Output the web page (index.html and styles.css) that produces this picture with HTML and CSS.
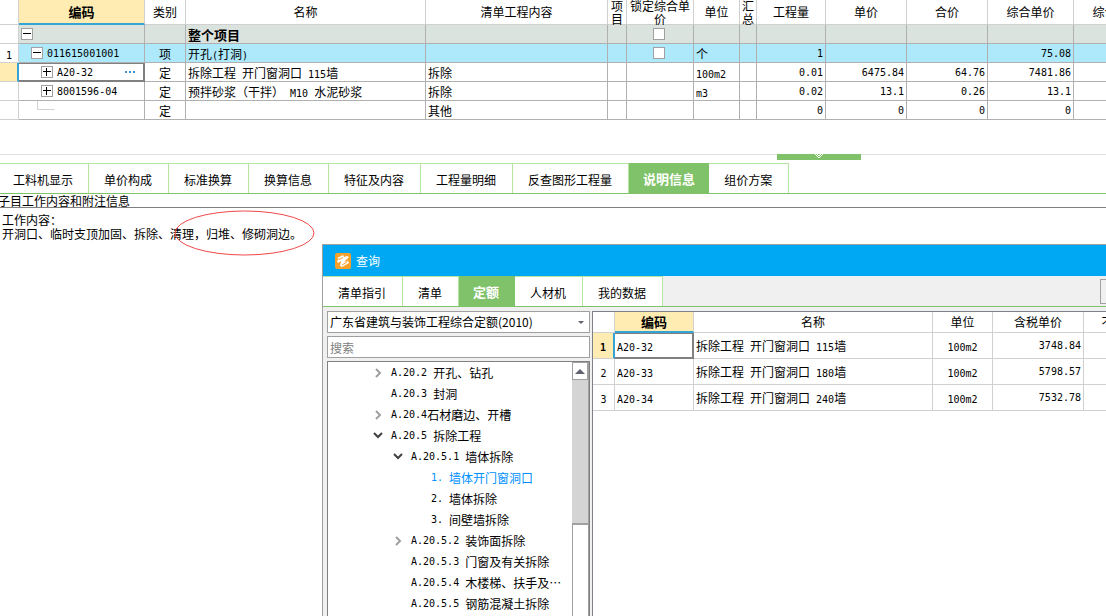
FILE: index.html
```html
<!DOCTYPE html>
<html lang="zh-CN">
<head>
<meta charset="utf-8">
<title>查询</title>
<link rel="stylesheet" href="styles.css">
</head>
<body>
<div class="app">
<section class="bill">
<table class="bill-table">
<colgroup><col class="w19"><col class="w126"><col class="w41"><col class="w240"><col class="w182"><col class="w19"><col class="w67"><col class="w46"><col class="w17"><col class="w69"><col class="w81"><col class="w81"><col class="w86"><col class="w86"></colgroup>
<thead><tr>
<th></th><th class="picked">编码</th><th>类别</th><th>名称</th><th>清单工程内容</th><th><div class="wrap">项目</div></th><th><div class="wrap">锁定综合单价</div></th><th>单位</th><th><div class="wrap">汇总</div></th><th>工程量</th><th>单价</th><th>合价</th><th>综合单价</th><th>综合合价</th>
</tr></thead>
<tbody>
<tr class="total"><td class="rowno"></td><td class="code"><div class="node lv0"><button class="fold" aria-label="折叠"><svg viewBox="0 0 12 12"><path d="M2 5.5h8"/></svg></button></div></td><td></td><td class="strong">整个项目</td><td></td><td></td><td class="mid check"><input type="checkbox" aria-label="锁定综合单价"></td><td></td><td></td><td></td><td></td><td></td><td></td><td></td></tr>
<tr class="item"><td class="rowno"><span class="n">1</span></td><td class="code"><div class="node lv1"><button class="fold" aria-label="折叠"><svg viewBox="0 0 12 12"><path d="M2 5.5h8"/></svg></button><span class="n">011615001001</span></div></td><td class="mid">项</td><td>开孔<span class="n">(</span>打洞<span class="n">)</span></td><td></td><td></td><td class="mid check"><input type="checkbox" aria-label="锁定综合单价"></td><td>个</td><td></td><td class="num">1</td><td class="num"></td><td class="num"></td><td class="num">75.08</td><td></td></tr>
<tr><td class="rowno current"></td><td class="code editing"><div class="node lv2"><button class="fold" aria-label="展开"><svg viewBox="0 0 12 12"><path d="M2 5.5h8M5.5 2v8"/></svg></button><span class="n">A20-32</span><button class="more" aria-label="更多"><svg viewBox="0 0 12 4"><path d="M1 1h2v2H1zM5 1h2v2H5zM9 1h2v2H9z"/></svg></button></div></td><td class="mid">定</td><td>拆除工程<span class="n"> </span>开门窗洞口<span class="n"> 115</span>墙</td><td>拆除</td><td></td><td></td><td><span class="n">100m2</span></td><td></td><td class="num">0.01</td><td class="num">6475.84</td><td class="num">64.76</td><td class="num">7481.86</td><td></td></tr>
<tr><td class="rowno"></td><td class="code"><div class="node lv2"><button class="fold" aria-label="展开"><svg viewBox="0 0 12 12"><path d="M2 5.5h8M5.5 2v8"/></svg></button><span class="n">8001596-04</span></div></td><td class="mid">定</td><td>预拌砂浆（干拌）<span class="n"> M10 </span>水泥砂浆</td><td>拆除</td><td></td><td></td><td><span class="n">m3</span></td><td></td><td class="num">0.02</td><td class="num">13.1</td><td class="num">0.26</td><td class="num">13.1</td><td></td></tr>
<tr><td class="rowno"></td><td class="code"><div class="node leaf"><svg class="branch" viewBox="0 0 18 18"><path d="M.5 0v8.500h17"/></svg></div></td><td class="mid">定</td><td></td><td>其他</td><td></td><td></td><td></td><td></td><td class="num">0</td><td class="num">0</td><td class="num">0</td><td class="num">0</td><td></td></tr>
</tbody>
</table>
</section>
<div class="splitter"><button class="handle" aria-label="收起"><svg viewBox="0 0 10 6"><path d="M1 0l4 4 4-4M3 0l2 2 2-2"/></svg></button></div>
<nav class="tabs">
<button>工料机显示</button><button>单价构成</button><button>标准换算</button><button>换算信息</button><button>特征及内容</button><button>工程量明细</button><button>反查图形工程量</button><button class="on">说明信息</button><button>组价方案</button>
</nav>
<h2 class="caption">子目工作内容和附注信息</h2>
<div class="notes">
<p>工作内容：</p>
<p>开洞口、临时支顶加固、拆除、清理，归堆、修砌洞边。</p>
<svg class="mark" viewBox="0 0 141 46"><ellipse cx="70.500" cy="23" rx="69.500" ry="22"/></svg>
</div>
</div>

<section class="dialog">
<header class="title"><svg class="logo" viewBox="0 0 16 16"><rect width="16" height="16" rx="2" fill="#f7a128"/><path d="M2 5l6-3 1 2 3-1 2 1-5 5 4-1 1 2-7 4-2-1 1-5-3 2-1-2 2-2z" fill="#fff"/><path d="M4 6.500l4-2M7 12l5-3" stroke="#f7a128" fill="none"/></svg>查询</header>
<div class="dialog-bar">
<nav class="tabs"><button>清单指引</button><button>清单</button><button class="on">定额</button><button>人材机</button><button>我的数据</button></nav>
<button class="edge" aria-label="选项"></button>
</div>
<div class="dialog-body">
<aside class="side">
<div class="picker"><select aria-label="定额库"><option>广东省建筑与装饰工程综合定额(2010)</option></select></div>
<input class="search" type="text" placeholder="搜索" aria-label="搜索">
<div class="tree">
<ul>
<li class="d1"><svg class="arrow" viewBox="0 0 10 10"><path d="M3 1l4 4-4 4"/></svg><span class="n">A.20.2 </span>开孔、钻孔</li>
<li class="d1"><i class="arrow"></i><span class="n">A.20.3 </span>封洞</li>
<li class="d1"><svg class="arrow" viewBox="0 0 10 10"><path d="M3 1l4 4-4 4"/></svg><span class="n">A.20.4</span>石材磨边、开槽</li>
<li class="d1"><svg class="arrow open" viewBox="0 0 10 10"><path d="M1 2l4 4 4-4"/></svg><span class="n">A.20.5 </span>拆除工程</li>
<li class="d2"><svg class="arrow open" viewBox="0 0 10 10"><path d="M1 2l4 4 4-4"/></svg><span class="n">A.20.5.1 </span>墙体拆除</li>
<li class="d3 chosen"><i class="arrow"></i><span class="n">1. </span>墙体开门窗洞口</li>
<li class="d3"><i class="arrow"></i><span class="n">2. </span>墙体拆除</li>
<li class="d3"><i class="arrow"></i><span class="n">3. </span>间壁墙拆除</li>
<li class="d2"><svg class="arrow" viewBox="0 0 10 10"><path d="M3 1l4 4-4 4"/></svg><span class="n">A.20.5.2 </span>装饰面拆除</li>
<li class="d2"><i class="arrow"></i><span class="n">A.20.5.3 </span>门窗及有关拆除</li>
<li class="d2"><i class="arrow"></i><span class="n">A.20.5.4 </span>木楼梯、扶手及⋯</li>
<li class="d2"><i class="arrow"></i><span class="n">A.20.5.5 </span>钢筋混凝土拆除</li>
</ul>
<div class="scroll"><button class="up" aria-label="向上滚动"><svg viewBox="0 0 10 5"><path d="M0 5l5-5 5 5z"/></svg></button><div class="track"></div><div class="thumb"></div></div>
</div>
</aside>
<div class="result">
<table class="quota">
<colgroup><col class="w22"><col class="w79"><col class="w239"><col class="w60"><col class="w91"><col class="w96"></colgroup>
<thead><tr><th></th><th class="picked">编码</th><th>名称</th><th>单位</th><th>含税单价</th><th>不含税单价</th></tr></thead>
<tbody>
<tr><td class="rowno current"><span class="n">1</span></td><td class="editing"><span class="n">A20-32</span></td><td>拆除工程<span class="n"> </span>开门窗洞口<span class="n"> 115</span>墙</td><td class="mid"><span class="n">100m2</span></td><td class="num">3748.84</td><td></td></tr>
<tr><td class="rowno"><span class="n">2</span></td><td><span class="n">A20-33</span></td><td>拆除工程<span class="n"> </span>开门窗洞口<span class="n"> 180</span>墙</td><td class="mid"><span class="n">100m2</span></td><td class="num">5798.57</td><td></td></tr>
<tr><td class="rowno"><span class="n">3</span></td><td><span class="n">A20-34</span></td><td>拆除工程<span class="n"> </span>开门窗洞口<span class="n"> 240</span>墙</td><td class="mid"><span class="n">100m2</span></td><td class="num">7532.78</td><td></td></tr>
</tbody>
</table>
</div>
</div>
</section>
</body>
</html>
```
FILE: styles.css
```css
* { box-sizing: border-box; }
body {
  margin: 0;
  position: relative;
  min-height: 100vh;
  overflow: hidden;
  background: #fff;
  color: #000;
  font: 12px/14px "Noto Sans CJK SC", sans-serif;
}
button, input, select { font: inherit; color: inherit; margin: 0; padding: 0; border: 0; border-radius: 0; background: none; }
svg { display: block; fill: none; }
.n, .num { font-family: "DejaVu Sans Mono", monospace; font-size: 10px; white-space: pre; }
.n { line-height: 10px; }

/* tables */
table { border-collapse: separate; border-spacing: 0; table-layout: fixed; width: 100%; }
th, td { padding: 0 2px; white-space: pre; text-align: left; font-weight: normal; border-right: 1px solid #b0b0b0; border-bottom: 1px solid #b0b0b0; }
th { text-align: center; border-color: #d0d0d0; }
.mid { text-align: center; }
.num { text-align: right; }
.rowno { text-align: center; border-color: #d0d0d0; padding: 0; }
th.picked { background: #ffecb3; font-weight: bold; font-size: 13px; border-bottom: 2px solid #35a3d4; }
.rowno.current { background: #ffecb3; font-weight: bold; border-right: 2px solid #35a3d4; }

.w17 { width: 17px; } .w19 { width: 19px; } .w22 { width: 22px; } .w41 { width: 41px; }
.w46 { width: 46px; } .w60 { width: 60px; } .w67 { width: 67px; } .w69 { width: 69px; }
.w79 { width: 79px; } .w81 { width: 81px; } .w86 { width: 86px; } .w91 { width: 91px; }
.w96 { width: 96px; } .w126 { width: 126px; } .w182 { width: 182px; } .w239 { width: 239px; } .w240 { width: 240px; }

/* bill of quantities */
.bill { overflow: hidden; }
.bill-table { min-width: 1160px; }
.bill-table th { height: 25px; padding: 0; }
.bill-table td { height: 19px; line-height: 14px; padding-top: 2px; }
.wrap { height: 24px; line-height: 13px; white-space: normal; display: flex; align-items: center; justify-content: center; }
.bill-table .total td:not(.rowno) { background: #dae3dd; }
.bill-table .item td:not(.rowno) { background: #ade9fb; }
.bill-table .strong { font-weight: bold; font-size: 13px; }
.bill-table .check { padding: 0 4px 0 2px; }
.bill-table input { appearance: none; display: block; width: 12px; height: 12px; margin: 0 auto; background: #fff; border: 1px solid #a0a0a0; }
.bill-table td.code { padding: 0; }
.node { display: flex; align-items: center; gap: 4px; height: 18px; }
.node .n { padding-top: 2px; }
.lv0 { padding-left: 2px; }
.lv1 { padding-left: 12px; }
.lv2 { padding-left: 22px; }
.leaf { padding-left: 18px; }
.fold { width: 12px; height: 12px; border: 1px solid #a0a0a0; background: #fff; }
.fold svg { width: 12px; height: 12px; margin: -1px; stroke: #000; }
.branch { width: 18px; height: 18px; stroke: #d0d0d0; }
.more { margin-left: auto; margin-right: 8px; }
.more svg { width: 12px; height: 4px; fill: #3c8ed0; }
.bill-table .editing, .quota .editing { box-shadow: inset -1px -1px #808080, inset 0 1px #808080; border-color: #808080; }

/* splitter and tabs */
.splitter { height: 9px; margin-top: 34px; border-top: 1px solid #e0e0e0; }
.handle { display: flex; justify-content: center; width: 84px; height: 6px; margin: -1px 0 0 777px; background: #80c269; }
.handle svg { width: 10px; height: 6px; stroke: #fff; }
.tabs { display: flex; height: 31px; }
.tabs button { padding: 3px 16px 0 15px; border-top: 1px solid #b4e6a0; border-right: 1px solid #b4e6a0; background: #fff; white-space: nowrap; }
.tabs button.on { padding: 0 14px; background: #80c269; border-color: #80c269; color: #fff; font-weight: bold; font-size: 13px; }
.app > .tabs { border-bottom: 1px solid #80c269; }
.app > .tabs button:first-child { padding: 3px 15px 0 13px; }
.app > .tabs button.on { padding-right: 13px; }
.caption { margin: 0; height: 14px; line-height: 14px; font-size: 12px; font-weight: normal; text-indent: -2px; border-bottom: 1px solid #808080; }
.notes { position: relative; padding: 5px 2px; }
.notes p { margin: 0; }
.mark { position: absolute; left: 174px; top: 2px; width: 141px; height: 46px; stroke: #f04848; }

/* query window */
.dialog { position: absolute; left: 322px; right: 0; top: 244px; bottom: 0; display: flex; flex-direction: column; overflow: hidden; border-left: 1px solid #a0a0a0; border-top: 1px solid #a0a0a0; background: #f0f0f0; }
.title { display: flex; align-items: center; gap: 5px; flex: none; height: 31px; padding-left: 12px; background: #00a8f3; color: #fff; }
.logo { width: 16px; height: 16px; }
.dialog-bar { display: flex; flex: none; justify-content: space-between; align-items: center; height: 31px; border-bottom: 1px solid #80c269; }
.dialog-bar .tabs { height: 30px; }
.dialog-bar .tabs .on { padding-right: 15px; }
.edge { width: 6px; height: 25px; border: 1px solid #a0a0a0; border-right: 0; }
.dialog-body { display: flex; flex: 1; min-height: 0; padding-top: 4px; }
.side { display: flex; flex-direction: column; gap: 3px; flex: none; width: 269px; padding: 0 2px 0 4px; }
.picker { position: relative; }
.picker::after { content: ""; position: absolute; right: 6px; top: 10px; border: 3px solid transparent; border-top-color: #606070; border-bottom: 0; }
.picker select { appearance: none; display: block; width: 100%; }
.picker select, .search { height: 22px; padding: 0 2px; border: 1px solid #a0a0a0; background: #fff; }
.search::placeholder { color: #808080; opacity: 1; }
.tree { display: flex; flex: 1; min-height: 0; border: 1px solid #808080; border-bottom: 0; background: #fff; overflow: hidden; }
.tree ul { flex: 1; min-width: 0; list-style: none; margin: 0; padding: 0; }
.tree li { display: flex; align-items: center; height: 21px; white-space: nowrap; }
.d1 { padding-left: 45px; }
.d2 { padding-left: 65px; }
.d3 { padding-left: 85px; }
.chosen { color: #0090ff; }
.arrow { flex: none; width: 10px; height: 10px; margin-right: 8px; stroke: #a0a0a0; stroke-width: 2; }
.arrow.open { stroke: #404040; }
.scroll { display: flex; flex-direction: column; flex: none; width: 17px; border-right: 1px solid #a0a0a0; }
.up { display: grid; place-items: center; flex: none; height: 18px; border: 1px solid #a0a0a0; }
.up svg { width: 10px; height: 5px; fill: #606070; }
.track { flex: none; height: 143px; background: #d4d4d4; }
.thumb { flex: 1; border: 1px solid #a0a0a0; border-width: 2px 0 0 1px; }
.result { flex: 1; min-width: 0; overflow: hidden; border-left: 1px solid #808088; border-top: 1px solid #808088; background: #fff; }
.quota { min-width: 587px; }
.quota th { height: 21px; border-color: #d0d0d0; }
.quota td { height: 26px; border-color: #d0d0d0; }
.quota th.picked { border-bottom-color: #35a3d4; }
.quota .rowno.current { border-right-color: #35a3d4; }
```
